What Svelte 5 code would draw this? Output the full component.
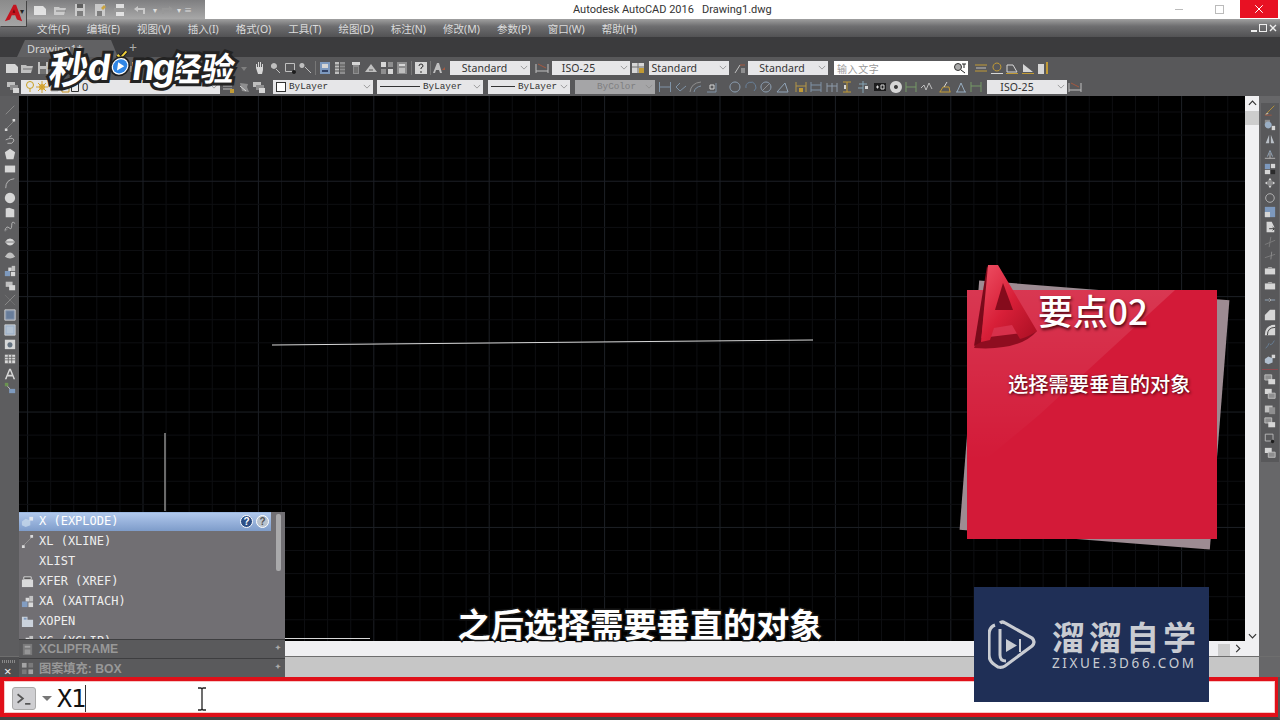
<script>
  const w = '#d6d6d6', l = '#f2f2f2', g = '#9b9b9b', b = '#86a8d4', y = '#d9a92e', r = '#b5583a', n = 'none';

  // every icon is drawn on a 14x14 box: [path, fill, stroke]
  const icons = {
    new: [['M1 3h9l3 3v6H1z', l, n]],
    open: [['M1 4h5l1 1h6l-2 7H1z', w, n], ['M3 8h10', n, '#777']],
    save: [['M2 1h10v12H2z', w, n], ['M4 1h6v4H4z', '#555', n], ['M4 8h6v5H4z', '#777', n]],
    saveas: [['M2 1h10v12H2z', w, n], ['M8 5l3-3 2 2-3 3z', y, n], ['M4 8h5v5H4z', '#777', n]],
    print: [['M3 1h8v4H3z', l, n], ['M1 5h12v6H1z', g, n], ['M3 9h8v4H3z', l, n]],
    undo: [['M5 3L1 6l4 3V7h5v4h2V5H5z', w, n]],
    redo: [['M9 3l4 3-4 3V7H4v4H2V5h7z', '#999', n]],
    down: [['M4 6h6l-3 4z', '#888', n]],
    hand: [['M3 7V3h1v3h1V1h1v5h1V1h1v5h1V3h1v6l-1 4H5z', l, n]],
    zoom: [['M6 2a3 3 0 1 1-.1 0z', w, n], ['M8 8l4 4', g, '#ddd']],
    zwin: [['M1.5 2.5h9v8h-9z', n, w], ['M10 9a2 2 0 1 1-.1 0z', '#111', n]],
    zprev: [['M3 2a2.5 2.5 0 1 1-.1 0z', w, n], ['M6 6l6 6', n, w]],
    props: [['M2 1h10v12H2z', b, n], ['M4 3h6v4H4z', l, n], ['M4 9h6v2H4z', '#2a3f6a', n]],
    dc: [['M2 1h4v12H2z', w, n], ['M7 1h5v12H7z', g, n], ['M2 4h10M2 7h10M2 10h10', n, '#555']],
    tp: [['M3 1h8v3H3z', l, n], ['M4 4h6v9H4z', g, n], ['M6 6v6M8 6v6', n, '#555']],
    sheet: [['M1 11L7 3l6 8z', w, n], ['M5 9h4', n, '#555']],
    markup: [['M1 1h5v5H1z', l, n], ['M8 1h5v5H8z', g, n], ['M1 8h5v5H1z', g, n], ['M8 8h5v5H8z', l, n]],
    calc: [['M2 1h10v12H2z', g, n], ['M4 3h6v2H4z', l, n], ['M4 7h6v5H4z', w, n]],
    help: [['M1 1h12v12H1z', l, n], ['M5 5q0-2 2-2t2 2q0 1-2 2v1M7 10v2', n, '#222']],
    tstyle: [['M1 12L5 2h2l3 10H8l-1-3H4l-1 3z', w, n], ['M10 9l3-3v3z', r, n]],
    dstyle: [['M1 3v9M13 3v9M1 10h12', n, w], ['M3 3l8 4', n, r]],
    table: [['M1 2h12v10H1z', l, n], ['M1 6h12M7 2v10', n, '#777'], ['M8 7h5v5H8z', y, n]],
    lead: [['M3 12L8 4', n, w], ['M8 4h5', n, r], ['M9 7h4v5H9z', g, n]],
    d1: [['M1 4h12M1 10h12', n, y], ['M2 7h10', n, w]],
    d2: [['M7 2a4 4 0 1 1-.1 0z', n, y], ['M1 12.5h12', n, l]],
    d3: [['M2 11V4h6l4 7z', n, l], ['M1 12.5h12', n, y]],
    d4: [['M2 11V3l10 8z', l, n], ['M1 12.5h12', n, y]],
    d5: [['M2 3h6v10H2z', l, n], ['M10 1h2v12h-2z', y, n]],
    layer: [['M1 2h8v5H1z', w, n], ['M4 5h8v5H4z', g, n], ['M7 8h6v5H7z', l, n]],
    layer2: [['M2 3h9M2 6h9M2 9h9', n, w], ['M9 9h4v4H9z', y, n]],
    layer3: [['M3 3l8 1-1 3 2 5-7-1z', g, n], ['M3 6l6 5', n, l]],
    dlin: [['M1.5 2v10M12.5 2v10M1.5 7h11', n, '#88a0b8']],
    dali: [['M2 7l4-4M6 11l6-5', n, '#88a0b8'], ['M2 7l4 4', n, '#88a0b8']],
    darc: [['M1 12Q2 3 12 2', n, g], ['M5 12Q6 7 12 6', n, '#88a0b8']],
    dord: [['M2 12h9v-9', n, '#88a0b8'], ['M5 5h4v4H5z', n, l]],
    drad: [['M7 2a5 5 0 1 1-.1 0z', n, '#9cb4cc']],
    djog: [['M2 8a5 5 0 1 1 8 3', n, '#6d8aa8']],
    ddia: [['M7 2a5 5 0 1 1-.1 0z', n, '#9cb4cc'], ['M4 10l6-6', n, g]],
    dang: [['M2 12h11L10 3z', n, '#9cb4cc']],
    dqk: [['M2 2v10M12 2v10M2 6h10', n, '#c9a442'], ['M5 8h4v4H5z', y, n]],
    dbas: [['M2 2v10M12 2v10M2 5h10M2 10h10', n, '#88a0b8']],
    dcon: [['M2 3v9M7 3v9M12 3v9M2 6h10', n, '#9ab']],
    dsp: [['M3 2h8M3 12h8', n, y], ['M7 2v10', n, y], ['M4 5h2v4H4z', l, n]],
    dtol: [['M7 1v12M3 4h8M2 8h5', n, '#8fb4c8'], ['M9 6h3v3H9z', l, n]],
    dcen: [['M1 3h12v8H1z', '#111', n], ['M3 7h3M4.500 5.500v3', n, l], ['M8 5h3v4H8z', n, l]],
    dins: [['M7 1a6 6 0 1 1-.1 0z', l, n], ['M7 5a2 2 0 1 1-.1 0z', '#333', n]],
    djl: [['M2 2v10M12 2v10M2 7h10', n, '#7da86a']],
    dbr: [['M1 8l3-3 2 5 3-7 3 6', n, w]],
    dedit: [['M1.500 12h11M2 12l3-5h6l1 5', n, y], ['M9 2L6 7', n, l]],
    dtext: [['M2 12h10M3 12l4-9 4 9', n, '#a5c0d8']],
    dupd: [['M2 2v10M12 2v10M2 6h10', n, '#7da86a']],
    line: [['M2 12L12 2', n, g]],
    xline: [['M2 12L12 2', n, g], ['M1 11h3v3H1zM10 0h3v3h-3z', l, n]],
    pline: [['M2 8q7-3 9-1t-2 5H4', n, w], ['M9 3L6 5', n, w]],
    poly: [['M7 1l6 4-2 8H3L1 5z', l, n]],
    rect: [['M1 3h12v8H1z', l, n]],
    arc: [['M2 13Q2 3 12 2', n, w]],
    circ: [['M7 1a6 6 0 1 1-.1 0z', l, n]],
    cloud: [['M2 3l4-1 6 2v9H2z', l, n]],
    spl: [['M1 11q2-6 5-3t3-3 4-2', n, w], ['M1 12q2-1 3-3', n, g]],
    ell: [['M1 7q3-4 6-4t6 4q-3 4-6 4t-6-4z', l, n], ['M1 7h12', n, '#777']],
    ella: [['M1 8q3-5 6-5t6 5q-3 2-6 2t-6-2z', w, n]],
    blk: [['M5 3h4v4H5z', l, n], ['M9 1h4v6H9z', w, n], ['M1 7h6v6H1z', b, n], ['M8 8h5v5H8z', l, n]],
    ins: [['M2 2h8v6H2z', w, n], ['M6 6h7v6H6z', l, n]],
    pt: [['M1 13L13 1', n, g], ['M1 1l12 12', n, '#777']],
    hatch: [['M1 1h12v12H1z', '#7f94b4', l], ['M3 3h8v8H3z', '#6a83a8', n]],
    grad: [['M1 1h12v12H1z', '#aac2e0', l], ['M3 3h8v8H3z', '#c7d7ea', n]],
    reg: [['M1 2h12v11H1z', l, n], ['M7 5a3 3 0 1 1-.1 0z', '#678', n]],
    tbl: [['M1 2h12v10H1z', l, n], ['M1 5h12M1 8h12M5 2v10M9 2v10', n, '#666']],
    letter: [['M1 13L6 1h2l5 12h-2l-1-3H4l-1 3zM5 8h4L7 3z', l, n]],
    add: [['M1 1h4v4H1z', '#6fa04f', n], ['M6 8h7v5H6z', b, n], ['M4 5l3 3', n, l]],
    pen: [['M2 12L12 2', n, y], ['M2 12l3-1', n, l], ['M1 13h8', n, r]],
    copy: [['M1 1h6v6H1z', g, n], ['M5 3a4 4 0 1 1-.1 0z', '#a9c2dc', n], ['M9 8h4v5H9z', l, n]],
    mirror: [['M6 2L2 12h4zM8 2l4 10H8z', '#cfd6de', n]],
    offs: [['M4 10L7 3l3 7', n, '#a9c2dc'], ['M1 12h12M7 6v6', n, w]],
    arr: [['M1 1h6v6H1z', b, n], ['M8 1h5v5H8z', l, n], ['M1 8h6v5H1z', l, n], ['M8 8h5v5H8z', '#222', n]],
    move: [['M7 1l2 3H5zM7 13l2-3H5zM1 7l3-2v4zM13 7l-3-2v4z', l, n], ['M7 4a3 3 0 1 1-.1 0z', g, n]],
    rot: [['M7 2a5 5 0 1 1-.1 0z', n, w]],
    scale: [['M1 1h12v12H1z', b, n], ['M1 7h6v6H1z', l, n]],
    stretch: [['M3 1h6l3 6v6H3z', l, n], ['M6 9h6M10 7l2 2-2 2', n, '#222']],
    trim: [['M1 10L13 5M8 1l-2 12', n, '#888']],
    ext: [['M1 9L13 5', n, '#888'], ['M9 2l-1 9', n, g]],
    brk: [['M1 4h12v7H1z', l, n], ['M5 4v-1h4v1', n, w]],
    join: [['M1 7h5M8 7h5', n, '#a9c2dc'], ['M6 5l2 2-2 2', n, w]],
    cham: [['M1 13V7l6-6h6v12z', l, n]],
    fil: [['M1 13Q1 1 13 1v12z', l, n], ['M4 13Q4 4 13 4', n, '#222']],
    blend: [['M2 12q3-3 4-6', n, '#6d8aa8'], ['M7 8q3 0 5-5', n, '#6d8aa8']],
    expl: [['M1 7l4-3 5 2v5l-5 2-4-2z', '#c5d7ea', n], ['M9 2h4v4H9z', l, n]],
    ord: [['M1 1h8v6H1z', g, '#ddd'], ['M5 6h8v6H5z', l, n]],
    ord2: [['M1 1h8v6H1z', l, n], ['M5 6h8v6H5z', g, '#ddd']],
    ord3: [['M1 3h9v8H1z', w, n], ['M6 5h7v8H6z', g, n]],
    xfer: [['M1 5h12v8H1z', l, n], ['M3 2h8v3H3z', '#555', l]],
    xopen: [['M1 2h6v3h6v8H1z', '#dfe8f4', n], ['M3 3h3v2H3z', b, n]]
  };

  const row1 = ['new', 'open', 'save', 'saveas', 'print', 'new', 'open', 'save', 'print', 'undo', 'redo', 'dc', 'undo', 'redo', 'print', 'down',
    'hand', 'zoom', 'zwin', 'zprev', '|', 'props', 'dc', 'tp', 'sheet', 'markup', 'calc', '|', 'help', '|', 'tstyle', 2.5,
    { t: 'Standard', w: 80, pad: 10 }, 5, 'dstyle', 1.5, { t: 'ISO-25', w: 78, pad: 24 }, 1, 'table', 2.5, { t: 'Standard', w: 80, left: true }, 3, 'lead', 1,
    { t: 'Standard', w: 80, pad: 12 }, 6, { input: '输入文字', w: 134 }, 5.5, 'd1', 'd2', 'd3', 'd4', 'd5'];
  const row2 = ['layer', 0.5, { layers: true, w: 199 }, 0.5, 'layer2', 'layer3', 'layer', 6, { t: 'ByLayer', w: 100, mono: true, swatch: true }, 4,
    { t: 'ByLayer', w: 106, mono: true, dash: 40 }, 5, { t: 'ByLayer', w: 82, mono: true, dash: 24 }, 5, { t: 'ByColor', w: 80, mono: true, off: true }, 2.5,
    'dlin', 'dali', 'darc', 'dord', 8, 'drad', 'djog', 'ddia', 'dang', 3.5, 'dqk', 'dbas', 'dcon', 'dsp', 'dtol', 2, 'dcen', 'dins', 'djl', 'dbr', 3,
    'dedit', 'dtext', 'dupd', 3, { t: 'ISO-25', w: 80, pad: 20 }, 0.5, 'dstyle'];

  const menus = ['文件(F)', '编辑(E)', '视图(V)', '插入(I)', '格式(O)', '工具(T)', '绘图(D)', '标注(N)', '修改(M)', '参数(P)', '窗口(W)', '帮助(H)'];
  const leftBar = ['line', 'xline', 'pline', 'poly', 'rect', 'arc', 'circ', 'cloud', 'spl', 'ell', 'ella', 'blk', 'ins', 'pt', 'hatch', 'grad', 'reg', 'tbl', 'letter', 'add'];
  const rightBar = ['pen', 'copy', 'mirror', 'offs', 'arr', 'move', 'rot', 'scale', 'stretch', 'trim', 'ext', 'brk', 'brk', 'join', 'cham', 'fil', 'blend', 'expl'];
  const rightBar2 = ['ord', 'ord2', 'ord3', 'ord', 'zwin', 'ord2'];
  const rows = [
    { icon: 'expl', text: 'X (EXPLODE)' },
    { icon: 'xline', text: 'XL (XLINE)' },
    { text: 'XLIST' },
    { icon: 'xfer', text: 'XFER (XREF)' },
    { icon: 'blk', text: 'XA (XATTACH)' },
    { icon: 'xopen', text: 'XOPEN' },
    { icon: 'blk', text: 'XC (XCLIP)' }
  ];

  // canvas grid, major every fifth line
  const step = 115.4 / 5;
  const xs = Array.from({ length: 54 }, (_, i) => 8.6 + step * i);
  const ys = Array.from({ length: 25 }, (_, i) => 16 + step * i);
</script>

{#snippet ic(name)}
  <svg class="ic" viewBox="0 0 14 14">
    {#each icons[name] as [d, f, s]}
      <path {d} fill={f} stroke={s} />
    {/each}
  </svg>
{/snippet}

{#snippet chevron()}
  <svg class="chev" viewBox="0 0 10 6"><path d="M1 1l4 4 4-4" fill="none" stroke="#8a8a8a" /></svg>
{/snippet}

{#snippet toolbar(items)}
  {#each items as it}
    {#if typeof it === 'number'}
      <span style="width:{it}px;flex:none"></span>
    {:else if it === '|'}
      <span class="sep"></span>
    {:else if typeof it === 'string'}
      <span class="slot">{@render ic(it)}</span>
    {:else if it.input}
      <span class="search" style="width:{it.w}px">
        <span>{it.input}</span>
        <svg class="find" viewBox="0 0 14 12"><circle cx="5" cy="5" r="3.500" fill="#aaa" stroke="#333" /><path d="M8 8l4 3M9 2h4M11 2v4" stroke="#222" fill="none" /></svg>
      </span>
    {:else if it.layers}
      <span class="combo layers" style="width:{it.w}px">
        <svg viewBox="0 0 56 14" class="lstate">
          <circle cx="6" cy="5" r="3.500" fill="none" stroke="#c9a020" /><path d="M6 9v3" stroke="#c9a020" />
          <circle cx="18" cy="7" r="3" fill="#e0b040" /><path d="M18 1v12M12 7h12M14 3l8 8M22 3l-8 8" stroke="#d0a030" />
          <path d="M27 5h7v6h-7z" fill="none" stroke="#b0b0b0" />
          <path d="M38 6h7v6h-7z" fill="none" stroke="#c49020" /><path d="M40 6V3h3v3" fill="none" stroke="#c49020" />
          <path d="M47.500 3.500h7v8h-7z" fill="#eee" stroke="#333" />
        </svg>
        <span class="lname">0</span>
        {@render chevron()}
      </span>
    {:else}
      <span class="combo" class:mono={it.mono} class:off={it.off} class:start={it.left} style="width:{it.w}px;padding-right:{it.pad ?? 0}px">
        {#if it.swatch}<i class="swatch"></i>{/if}
        {#if it.dash}<i class="dash" style="width:{it.dash}px"></i>{/if}
        <span class="ctext">{it.t}</span>
        {@render chevron()}
      </span>
    {/if}
  {/each}
{/snippet}

{#snippet bigA(cls)}
  <svg class={cls} viewBox="972 263 70 90">
    <defs>
      <linearGradient id="af" x1="0" y1="0" x2="1" y2="1">
        <stop offset="0" stop-color="#ee5064" /><stop offset="0.5" stop-color="#d81f38" /><stop offset="1" stop-color="#a80e22" />
      </linearGradient>
    </defs>
    <path d="M974 348q2-6 7-10l56-7q-17 20-63 17z" fill="#8f0d20" />
    <path d="M987 266l-13 80 7-4 8-72z" fill="#7a0a1a" />
    <path d="M988 265h10l39 66q-7 5-17 8l-8-14-18 3-4 12-9 2z" fill="url(#af)" />
    <path d="M1003 283l-8 27h18z" fill="#850b1c" />
  </svg>
{/snippet}

<div class="app">
  <header class="title">
    <div class="qat">
      <span class="appbtn">
        <svg viewBox="0 0 22 24"><path d="M11 2h3l7 19-6-2-2-5H9l-2 5-6 2z" fill="#c4141f" /><path d="M10 11h3l-1.500-4z" fill="#6b0910" /></svg>
      </span>
      <span class="dot">▾</span>
      {#each ['new', 'open', 'save', 'saveas', 'print', 'undo'] as name}
        <span class="slot wide">{@render ic(name)}</span>
      {/each}
      <span class="dot">▾</span>
      <span class="slot">{@render ic('redo')}</span>
      <span class="dot">▾</span>
      <span class="dot">≡</span>
    </div>
    <div class="caption">Autodesk AutoCAD 2016&nbsp;&nbsp;&nbsp;Drawing1.dwg</div>
    <div class="winbtns">
      <span class="wb mid-btn"><i class="minus"></i></span>
      <span class="wb mid-btn"><i class="rest"></i></span>
      <span class="wb close">
        <svg viewBox="0 0 12 12"><path d="M1.500 1.500l9 9M10.500 1.500l-9 9" stroke="#fff" stroke-width="1.200" /></svg>
      </span>
    </div>
  </header>

  <nav class="menu">
    {#each menus as m}<span>{m}</span>{/each}
    <span class="mdi">
      <i class="minus2"></i><i class="rest2"></i>
      <svg viewBox="0 0 8 8"><path d="M1 1l6 6M7 1L1 7" stroke="#eee" stroke-width="1.400" /></svg>
    </span>
  </nav>

  <div class="tabs">
    <span class="tab">Drawing1*</span>
    <span class="plus">+</span>
  </div>

  <div class="tb one">{@render toolbar(row1)}</div>
  <div class="tb two">{@render toolbar(row2)}</div>

  <div class="main">
    <aside class="vbar left">
      {#each leftBar as name}<span class="vslot">{@render ic(name)}</span>{/each}
    </aside>

    <div class="centre">
      <div class="mid">
        <svg class="canvas" viewBox="0 0 1226 545" preserveAspectRatio="none">
          {#each xs as x, i}
            <line x1={x} x2={x} y1="0" y2="545" stroke={i % 5 === 0 ? '#1d2026' : '#0e0f12'} />
          {/each}
          {#each ys as yy, i}
            <line x1="0" x2="1226" y1={yy} y2={yy} stroke={i % 5 === 3 ? '#1d2026' : '#0e0f12'} />
          {/each}
          <line x1="253" y1="249" x2="794" y2="244" stroke="#d8d8d8" />
          <line x1="146" y1="337" x2="146" y2="415" stroke="#8c8c8c" stroke-width="1.500" />
          <line x1="266" y1="542.500" x2="351" y2="542.500" stroke="#d8d8d8" />
        </svg>
        <div class="vscroll">
          <svg class="arrow" viewBox="0 0 10 6"><path d="M1 5l4-4 4 4" fill="none" stroke="#333" stroke-width="1.300" /></svg>
          <i class="vthumb"></i>
          <span class="fill"></span>
          <svg class="arrow" viewBox="0 0 10 6"><path d="M1 1l4 4 4-4" fill="none" stroke="#333" stroke-width="1.300" /></svg>
        </div>
      </div>
      <div class="hscroll">
        <i class="hthumb"></i>
        <svg class="arrow-r" viewBox="0 0 6 10"><path d="M1 1l4 4-4 4" fill="none" stroke="#333" stroke-width="1.300" /></svg>
      </div>
    </div>

    <aside class="right">
      <div class="panel">
        {#each rightBar as name}<span class="vslot">{@render ic(name)}</span>{/each}
        <i class="rule"></i>
        {#each rightBar2 as name}<span class="vslot">{@render ic(name)}</span>{/each}
      </div>
    </aside>
  </div>

  <div class="strip">
    <div class="grip"><i></i><b>×</b></div>
    <div class="stripfill"></div>
    <div class="stripright"></div>
  </div>

  <div class="cmd">
    <div class="cmdin">
      <span class="prompt">
        <svg viewBox="0 0 16 14"><path d="M2 3l5 4-5 4" fill="none" stroke="#555" stroke-width="1.600" /><path d="M9 12h5" stroke="#555" stroke-width="1.600" /></svg>
      </span>
      <i class="caret"></i>
      <span class="typed">X1</span>
      <i class="cursor"></i>
      <svg class="ibeam" viewBox="0 0 10 24"><path d="M1 1h3l1 1 1-1h3M5 2v20M1 23h3l1-1 1 1h3" fill="none" stroke="#222" stroke-width="1.300" /></svg>
    </div>
  </div>

  <!-- autocomplete over the drawing -->
  <div class="suggest">
    <div class="list">
      {#each rows as row, i}
        <div class="row" class:sel={i === 0}>
          <span class="ricon">{#if row.icon}{@render ic(row.icon)}{/if}</span>
          <span>{row.text}</span>
          {#if i === 0}
            <span class="qbtns"><i class="q">?</i><i class="q alt">?</i></span>
          {/if}
        </div>
      {/each}
      <i class="lthumb"></i>
    </div>
    <div class="sbar"><span class="ricon">{@render ic('calc')}</span><span>XCLIPFRAME</span><em>✦</em></div>
    <div class="sbar"><span class="ricon">{@render ic('markup')}</span><span>图案填充: BOX</span><em>✦</em></div>
  </div>

  <!-- video overlays -->
  <div class="brand">
    <span class="b-cn first">秒</span><span class="b-la">d</span>
    <svg class="b-play" viewBox="0 0 24 32">
      <path d="M7 6l4 4 6-8" fill="none" stroke="#222" stroke-width="5" />
      <path d="M7 6l4 4 6-8" fill="none" stroke="#f2d23a" stroke-width="2.500" />
      <circle cx="12" cy="20" r="11" fill="#fff" stroke="#222" stroke-width="2" />
      <circle cx="12" cy="20" r="8.500" fill="#2f86e6" />
      <path d="M9 15l8 5-8 5z" fill="#fff" />
    </svg>
    <span class="b-la top">ng</span><span class="b-cn last">经验</span>
  </div>

  <div class="subtitle">之后选择需要垂直的对象</div>

  <div class="card">
    <i class="cardback"></i>
    <div class="cardface">
      <i class="sheen"></i>
      <h2>要点02</h2>
      <p>选择需要垂直的对象</p>
    </div>
    {@render bigA('cardlogo')}
  </div>

  <div class="site">
    <svg class="sitemark" viewBox="988 620 48 50">
      <path d="M1000 623q2-2 5 0l27 15q4 4 0 8l-27 20q-3 2-7 1l-3-2q-6-4-6-10v-20q0-8 6-10" fill="none" stroke="#c9ccd2" stroke-width="3.200" />
      <path d="M1000 629v26q0 6 6 6" fill="none" stroke="#c9ccd2" stroke-width="3" />
      <path d="M1006 639l11 6.500-11 6.500z" fill="#c9ccd2" />
      <path d="M1020 639v13" stroke="#c9ccd2" stroke-width="2" />
    </svg>
    <div class="sitetext">
      <strong>溜溜自学</strong>
      <small>ZIXUE.3D66.COM</small>
    </div>
  </div>
</div>

<style>
  :global(body) { margin: 0; background: #000; }
  .app {
    position: relative; width: 1280px; height: 720px; overflow: hidden;
    display: flex; flex-direction: column; background: #5b5b5d;
    font-family: "Noto Sans", "Noto Sans CJK SC", sans-serif;
  }
  i, em { font-style: normal; display: block; }
  .ic { width: 14px; height: 14px; display: block; opacity: 0.82; filter: blur(0.3px); }
  .slot { width: 15.5px; height: 16px; flex: none; display: flex; align-items: center; justify-content: center; }

  .title { height: 19px; flex: none; background: #fff; display: flex; align-items: flex-start; position: relative; }
  .qat {
    height: 19px; width: 205px; display: flex; align-items: center; flex: none; position: relative;
    background: linear-gradient(#7e7e80, #a8a8a8);
  }
  .appbtn {
    width: 26px; height: 26px; margin-top: 7px; flex: none; background: linear-gradient(#8b8b8b, #a5a5a5);
    display: flex; align-items: center; justify-content: center; box-shadow: 1px 1px 0 #444; z-index: 2;
  }
  .appbtn svg { width: 19px; height: 21px; }
  .dot { width: 9px; color: #ddd; font-size: 8px; text-align: center; flex: none; }
  .slot.wide { width: 20px; }
  .qat .dot:nth-child(2) { position: absolute; left: 17px; top: 5px; z-index: 3; color: #222; }
  .qat .dot:nth-child(2) + .slot { margin-left: 4px; }
  .caption { position: absolute; left: 573px; top: 1px; font: 11px/17px Roboto, sans-serif; color: #333; white-space: pre; }
  .winbtns { margin-left: auto; display: flex; padding-right: 2px; }
  .wb { width: 38px; height: 18px; display: flex; align-items: center; justify-content: center; }
  .mid-btn { margin-right: 2px; }
  .minus { width: 8px; height: 1px; background: #bbb; }
  .rest { width: 7px; height: 7px; border: 1px solid #bbb; }
  .close { background: #e81123; }
  .close svg { width: 10px; height: 10px; }

  .menu {
    height: 18px; flex: none; display: flex; align-items: center; gap: 17.100px; padding-left: 37px;
    background: linear-gradient(#a0a0a0, #6e6e70 40%, #525254);
    color: #dcdcdc; font-size: 10.500px; box-sizing: border-box; position: relative;
  }
  .mdi { position: absolute; right: 3px; top: 5px; display: flex; gap: 2px; align-items: center; }
  .mdi svg { width: 8px; height: 8px; }
  .minus2 { width: 6px; height: 2px; background: #eee; margin-top: 5px; }
  .rest2 { width: 6px; height: 6px; border: 1px solid #eee; }

  .tabs { height: 20px; flex: none; background: #3b3b3d; display: flex; align-items: flex-end; padding-left: 17px; }
  .tab {
    width: 101px; height: 17px; box-sizing: border-box; padding: 1px 0 0 10px; background: #616163;
    color: #d5d5d5; font-size: 11px; line-height: 15px;
    clip-path: polygon(0 100%, 8px 0, 94px 0, 100% 100%);
  }
  .plus { color: #aaa; font-size: 14px; line-height: 18px; margin-left: 11px; }

  .tb { flex: none; display: flex; align-items: center; background: #58585a; box-sizing: border-box; }
  .tb.one { height: 20px; padding: 2px 0 0 4px; }
  .tb.two { height: 19px; padding-left: 5px; }
  .sep { width: 1px; height: 14px; background: #777; margin: 0 1px; flex: none; }
  .combo {
    height: 14px; flex: none; display: flex; align-items: center; justify-content: center; position: relative;
    box-sizing: border-box; background: #e6e6e8; color: #333; font-size: 10.500px; letter-spacing: 0.1px;
  }
  .combo.start { justify-content: flex-start; padding-left: 3px; }
  .combo.mono { font-family: "Liberation Mono", monospace; font-size: 9.300px; letter-spacing: 0; justify-content: flex-start; padding-left: 3px; gap: 3px; }
  .combo.off { background: #a5a5a7; color: #7e7e80; justify-content: center; }
  .chev { position: absolute; right: 2px; top: 4px; width: 8px; height: 5px; }
  .swatch { width: 8px; height: 8px; border: 1px solid #333; background: #fff; flex: none; }
  .dash { height: 1px; background: #333; flex: none; }
  .layers { justify-content: flex-start; padding-left: 3px; gap: 2px; }
  .lstate { width: 56px; height: 14px; flex: none; }
  .lname { font-size: 11px; }
  .search {
    height: 14px; flex: none; box-sizing: border-box; background: #fff; color: #999; font-size: 10px; letter-spacing: 0.6px;
    padding-left: 3px; display: flex; align-items: center; justify-content: space-between;
  }
  .find { width: 14px; height: 12px; margin-right: 1px; }

  .main { flex: 1; min-height: 0; display: flex; }
  .vbar.left { width: 19px; flex: none; background: #5d5d5f; box-sizing: border-box; padding-top: 6.700px; display: flex; flex-direction: column; align-items: center; }
  .vslot { height: 14.650px; flex: none; display: flex; align-items: center; justify-content: center; }
  .vslot .ic { width: 12px; height: 12px; }
  .centre { flex: 1; min-width: 0; display: flex; flex-direction: column; background: #f0f0f2; }
  .mid { flex: 1; min-height: 0; display: flex; }
  .canvas { flex: 1; min-width: 0; height: 100%; background: #000; display: block; }
  .vscroll { width: 14px; flex: none; background: #f0f0f2; display: flex; flex-direction: column; align-items: center; padding: 4px 0 2px; box-sizing: border-box; }
  .arrow { width: 9px; height: 6px; flex: none; }
  .vthumb { width: 14px; height: 14px; background: #cdcdcd; margin-top: 5px; flex: none; }
  .fill { flex: 1; }
  .hscroll { height: 15px; flex: none; display: flex; align-items: center; justify-content: flex-end; padding-right: 18px; }
  .hthumb { width: 12px; height: 12px; background: #cdcdcd; margin-right: 5px; margin-top: 2px; }
  .arrow-r { width: 6px; height: 9px; }
  .right { width: 21px; flex: none; background: #676769; box-sizing: border-box; padding: 6.700px 1px 0 2px; }
  .panel { background: #58585a; padding-bottom: 2px; display: flex; flex-direction: column; }
  .rule { height: 1px; background: #8a4a50; margin: 2.500px 1px; }

  .strip { height: 21px; flex: none; display: flex; border-top: 1px solid #6e6e6e; box-sizing: border-box; }
  .grip { width: 19px; flex: none; background: #4e4e50; position: relative; }
  .grip i { position: absolute; left: 2px; top: 3px; width: 14px; height: 3px; background: repeating-linear-gradient(90deg, #888 0 1px, transparent 1px 2px); }
  .grip b { position: absolute; left: 4px; top: 7px; color: #eee; font-size: 13px; line-height: 14px; font-weight: 400; }
  .stripfill { flex: 1; background: #c6c6c6; }
  .stripright { width: 21px; flex: none; background: #676769; }

  .cmd {
    height: 43px; flex: none; box-sizing: border-box; background: #e01019; padding: 4px 3px 4px 4px;
    border-bottom: 3px solid #444; border-right: 2px solid #555;
  }
  .cmdin {
    height: 100%; background: #fff; border: 1px solid #f7c8c8; box-sizing: border-box;
    display: flex; align-items: center; position: relative; padding: 3px 0 0 7px;
  }
  .prompt {
    width: 24px; height: 23px; flex: none; border-radius: 3px; background: #cfcfd2; border: 1px solid #aaa;
    box-sizing: border-box; display: flex; align-items: center; justify-content: center;
  }
  .prompt svg { width: 18px; height: 15px; }
  .caret { width: 0; height: 0; border: 5px solid transparent; border-top: 5px solid #777; border-bottom: 0; margin-left: 6px; flex: none; }
  .typed { font-family: "DejaVu Sans Mono", monospace; font-size: 25px; line-height: 28px; color: #111; margin-left: 5px; letter-spacing: -1px; }
  .cursor { width: 1px; height: 27px; background: #333; }
  .ibeam { position: absolute; left: 192px; top: 5px; width: 10px; height: 24px; }

  .suggest { position: absolute; left: 19px; top: 512px; width: 266px; color: #eee; font-family: "DejaVu Sans Mono", monospace; font-size: 12px; }
  .list { height: 127px; overflow: hidden; background: #716f73; position: relative; }
  .row { height: 20px; display: flex; align-items: center; box-sizing: border-box; width: 252px; padding-left: 2px; }
  .row.sel { height: 19px; background: linear-gradient(#b0c8ec, #7e9cca); color: #fff; border-top: 1px solid #9cb8e0; padding-bottom: 2px; }
  .ricon { width: 18px; flex: none; display: flex; }
  .ricon .ic { width: 13px; height: 13px; }
  .qbtns { margin-left: auto; display: flex; gap: 3px; margin-right: 2px; }
  .q {
    width: 13px; height: 13px; border-radius: 50%; background: #2d4f86; color: #fff; border: 1px solid #fff; box-sizing: border-box;
    font: 700 10px/11px "Liberation Sans", sans-serif; text-align: center;
  }
  .q.alt { background: #b9c3cf; color: #555; }
  .lthumb { position: absolute; left: 257px; top: 2px; width: 5px; height: 57px; background: #a9a9ab; border-radius: 2px; }
  .sbar {
    height: 19px; background: #5a5a5c; border-top: 1px solid #3e3e40; display: flex; align-items: center; box-sizing: border-box; padding-left: 2px;
    color: #989898; font: 700 12.200px "Liberation Sans", "Noto Sans CJK SC", sans-serif; position: relative;
  }
  .sbar .ricon { opacity: 0.6; }
  .sbar em { position: absolute; right: 4px; top: 4px; font-size: 7px; color: #aaa; }

  .brand {
    position: absolute; left: 50px; top: 44px; display: flex; align-items: center; height: 46px; color: #fff;
    font-family: "Noto Sans CJK SC", sans-serif; font-weight: 700; white-space: nowrap;
    transform: skewX(-8deg);
  }
  .brand span { -webkit-text-stroke: 6px #232323; paint-order: stroke fill; }
  .b-cn { font-size: 33px; line-height: 46px; }
  .b-cn.first { font-size: 39px; margin-right: -1px; }
  .b-cn.last { margin-left: -5px; }
  .b-la { font-family: "Inter", sans-serif; font-size: 36px; line-height: 40px; letter-spacing: -2px; }
  .b-la.top { position: relative; z-index: 1; }
  .b-play { width: 20px; height: 30px; margin: -8px 3px 0 1px; flex: none; }

  .subtitle {
    position: absolute; left: 0; right: 0; top: 599px; text-align: center; color: #fff; font-size: 33.200px; line-height: 48px;
    font-family: "Noto Sans CJK SC", sans-serif; font-weight: 700; -webkit-text-stroke: 3px #151515; paint-order: stroke fill;
  }

  .card { position: absolute; left: 967px; top: 290px; width: 250px; height: 249px; color: #fff; font-family: "Noto Sans CJK SC", sans-serif; }
  .cardback { position: absolute; left: 2px; top: 0; width: 251px; height: 250px; background: #9d8b92; transform: rotate(4.500deg); }
  .cardface { position: absolute; inset: 0; background: #d31a38; overflow: hidden; }
  .sheen {
    position: absolute; inset: 0;
    background: linear-gradient(180deg, rgba(255, 255, 255, 0.13), rgba(255, 255, 255, 0) 170px);
    clip-path: polygon(0 0, 208px 0, 72px 125px, 0 185px);
  }
  .cardface h2 { position: relative; margin: 0; padding-left: 71px; font-size: 35px; line-height: 40px; font-weight: 500; text-shadow: 1px 2px 3px #4a0610; }
  .cardface p { position: relative; margin: 38px 0 0; padding-left: 41px; font-size: 20.300px; line-height: 30px; font-weight: 500; text-shadow: 1px 1px 3px #3a050c; }
  :global(.cardlogo) { position: absolute; left: 5px; top: -27px; width: 70px; height: 90px; }

  .site { position: absolute; left: 974px; top: 587px; width: 235px; height: 115px; background: #1f2f56; box-sizing: border-box; padding: 30px 0 0 14px; display: flex; color: #c9ccd2; }
  .sitemark { width: 48px; height: 50px; margin-top: 3px; flex: none; }
  .sitetext { margin-left: 16px; display: flex; flex-direction: column; }
  .sitetext strong { font: 700 33px/38px "Noto Sans CJK SC", sans-serif; letter-spacing: 4px; white-space: nowrap; }
  .sitetext small { font: 400 13.500px/16px "Noto Sans", sans-serif; letter-spacing: 2.600px; white-space: nowrap; }
</style>
